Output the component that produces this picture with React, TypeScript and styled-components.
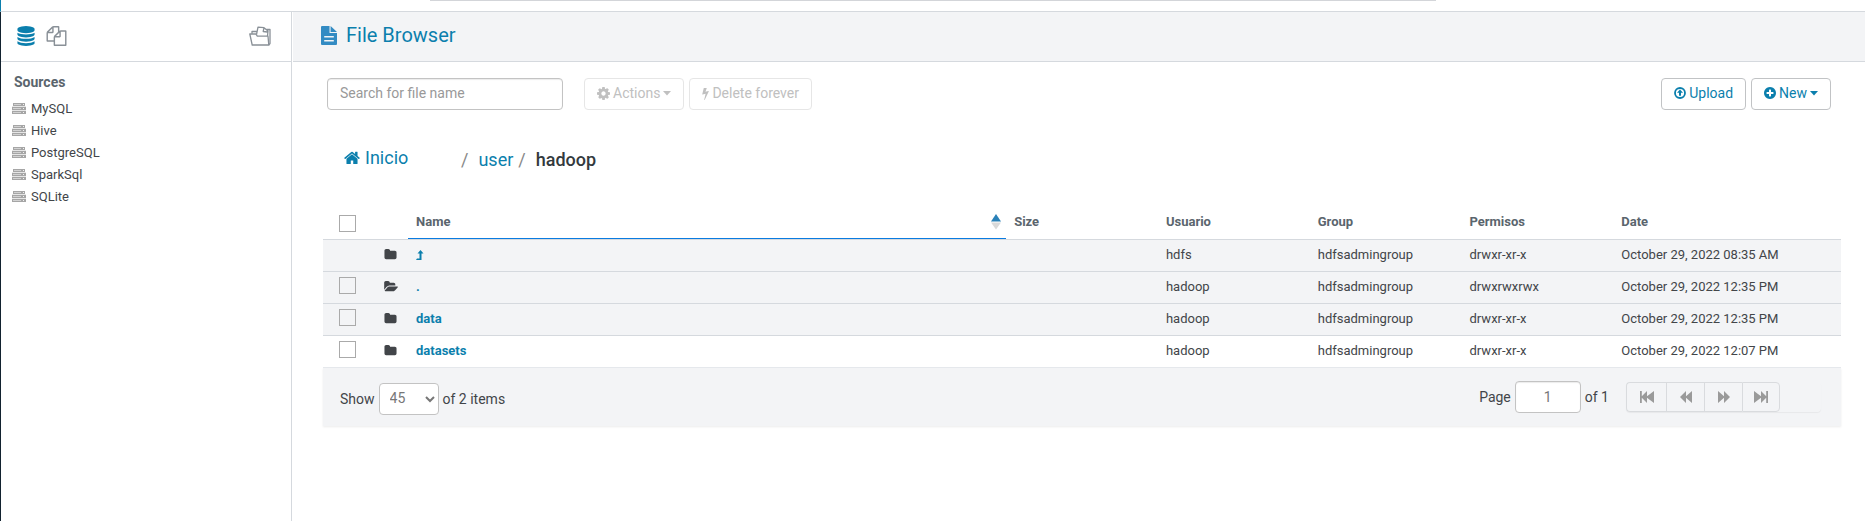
import React from 'react';
import styled, { createGlobalStyle, css } from 'styled-components';

const colors = {
  blue: '#0b7fad',
  textDark: '#33393d',
  text: '#424549',
  muted: '#5a656d',
  line: '#d5d9de',
  panel: '#f3f4f6',
  icon: '#899097',
};

const GlobalStyle = createGlobalStyle`
  *, *::before, *::after { box-sizing: border-box; }
  body { margin: 0; background: #fff; }
  body, button, input, select { font-family: Roboto, "Liberation Sans", sans-serif; }
  a { color: ${colors.blue}; text-decoration: none; }
`;

const Page = styled.div`
  display: flex;
  flex-direction: column;
  min-height: 100vh;
  color: ${colors.text};
  font-size: 13px;
`;

const TopBar = styled.div`
  display: flex;
  justify-content: center;
  height: 12px;
  border-left: 1px solid ${colors.blue};
  border-bottom: 1px solid ${colors.line};
`;

const SearchEdge = styled.div`
  width: 54%;
  height: 1px;
  background: #d3d5d9;
`;

const Body = styled.div`
  display: flex;
  flex: 1;
  border-left: 1px solid #12222f;
`;

const Sidebar = styled.aside`
  flex: none;
  width: 291px;
  border-right: 1px solid ${colors.line};
`;

const SidebarTabs = styled.div`
  display: flex;
  align-items: center;
  gap: 10px;
  height: 50px;
  padding: 0 20px 1px 15px;
  border-bottom: 1px solid ${colors.line};
`;

const IconButton = styled.button<{ $active?: boolean; $end?: boolean }>`
  display: flex;
  padding: 0;
  border: 0;
  background: none;
  color: ${(p) => (p.$active ? colors.blue : colors.icon)};
  ${(p) => p.$end && css`margin-left: auto;`}
`;

const SourcesTitle = styled.h2`
  margin: 11px 0 6px;
  padding-left: 13px;
  color: ${colors.muted};
  font-size: 14px;
  line-height: 18px;
  font-weight: 700;
`;

const SourceList = styled.ul`
  margin: 0;
  padding: 0 0 0 11px;
  list-style: none;
`;

const SourceLink = styled.a`
  display: flex;
  align-items: center;
  gap: 5px;
  height: 22px;
  color: ${colors.text};
`;

const Main = styled.main`
  flex: 1;
  min-width: 0;
  margin-left: 1px;
`;

const TitleBar = styled.header`
  display: flex;
  align-items: center;
  gap: 9px;
  height: 50px;
  padding: 0 0 2px 28px;
  background: ${colors.panel};
  border-bottom: 1px solid ${colors.line};
`;

const Title = styled.h1`
  margin: 0;
  padding-bottom: 2px;
  font-size: 20px;
  line-height: 24px;
  font-weight: 400;
`;

const Toolbar = styled.div`
  display: flex;
  align-items: center;
  gap: 5px;
  padding: 16px 34px 0 34px;
`;

const field = css`
  height: 32px;
  border: 1px solid #c3c3c3;
  border-radius: 4px;
  background: #fff;
  color: #777;
  font-size: 14px;
`;

const SearchInput = styled.input`
  ${field}
  width: 236px;
  margin-right: 16px;
  padding: 0 12px 2px;
  box-shadow: inset 0 1px 1px rgba(0, 0, 0, 0.08);
  &::placeholder { color: #999; opacity: 1; }
`;

const Button = styled.button`
  display: flex;
  align-items: center;
  gap: 3px;
  height: 32px;
  padding: 0 12px 2px;
  border: 1px solid #c1c3c5;
  border-radius: 4px;
  background: #fff;
  color: ${colors.blue};
  font-size: 14px;
  white-space: nowrap;
  &:disabled { color: #c0c0c0; border-color: #e6e6e6; }
`;

const Spacer = styled.div`
  flex: 1;
`;

const Breadcrumbs = styled.nav`
  display: flex;
  align-items: center;
  margin: 36px 0 0 51px;
  height: 28px;
  font-size: 18px;
  line-height: 24px;
`;

const HomeLink = styled.a`
  display: flex;
  align-items: center;
  gap: 5px;
  width: 117px;
  padding-bottom: 4px;
`;

const Crumb = styled.a`
  margin: 0 5px 0 10px;
`;

const Slash = styled.span`
  color: #888;
`;

const CurrentCrumb = styled.strong`
  margin-left: 10px;
  color: ${colors.textDark};
  font-weight: 500;
`;

const TableArea = styled.section`
  margin: 30px 24px 0 30px;
`;

const FileTable = styled.table`
  width: 100%;
  table-layout: fixed;
  border-collapse: separate;
  border-spacing: 0;
  line-height: 18px;
`;

const HeadCell = styled.th<{ $width?: string; $sorted?: boolean }>`
  width: ${(p) => p.$width ?? 'auto'};
  height: 36px;
  padding: 0 8px;
  border-bottom: 1px solid ${colors.line};
  ${(p) => p.$sorted && css`box-shadow: inset 0 -1px #0a7be0;`}
  color: ${colors.muted};
  font-weight: 700;
  text-align: left;
`;

const SortLabel = styled.div`
  display: flex;
  align-items: center;
  justify-content: space-between;
  margin-right: -3px;
`;

const Row = styled.tr<{ $shaded?: boolean }>`
  background: ${(p) => (p.$shaded ? colors.panel : '#fff')};
`;

const Cell = styled.td`
  height: 32px;
  padding: 0 8px 2px;
  border-bottom: 1px solid ${colors.line};
  white-space: nowrap;
  tr:last-child > & { border-bottom-color: #e6e9ed; }
  svg { display: block; }
`;

const CheckCell = styled(Cell)`
  padding: 0 16px 4px;
`;

const CheckHead = styled(HeadCell)`
  padding: 4px 16px 0;
`;

const NameLink = styled.a`
  font-weight: 700;
`;

const Check = styled.input`
  appearance: none;
  display: block;
  width: 17px;
  height: 17px;
  margin: 0;
  border: 1px solid #aaa;
  &:checked { background: ${colors.blue}; }
`;

const Footer = styled.footer`
  display: flex;
  align-items: center;
  justify-content: space-between;
  height: 58px;
  padding: 0 20px 0 17px;
  background: ${colors.panel};
  box-shadow: 0 1px 2px rgba(0, 0, 0, 0.08);
  font-size: 14px;
`;

const PageSize = styled.div`
  display: flex;
  align-items: center;
  gap: 4px;
  padding-top: 4px;
`;

const Select = styled.select`
  ${field}
  width: 60px;
  padding: 0 0 2px 6px;
`;

const Paging = styled.div`
  display: flex;
  align-items: center;
  gap: 4px;
`;

const PageInput = styled.input`
  ${field}
  width: 66px;
  padding: 0 12px;
  text-align: center;
  box-shadow: inset 0 1px 1px rgba(0, 0, 0, 0.08);
`;

const Pager = styled.div`
  display: flex;
  width: 195px;
  margin-left: 13px;
  border-radius: 4px;
  box-shadow: 0 1px 1px rgba(0, 0, 0, 0.05);
`;

const PagerButton = styled.button`
  display: flex;
  align-items: center;
  justify-content: center;
  width: 38px;
  height: 30px;
  padding: 0;
  border: 1px solid #d9dbde;
  border-right-width: 0;
  background: transparent;
  color: #9a9a9a;
  &:first-child { width: 40px; border-radius: 4px 0 0 4px; }
  &:last-child { border-right-width: 1px; border-radius: 0 4px 4px 0; }
`;

type GlyphProps = { d: string; w: number; h?: number; box?: string };

const Glyph = ({ d, w, h = w, box = '0 0 1792 1792' }: GlyphProps) => (
  <svg width={w} height={h} viewBox={box} fill="currentColor" aria-hidden="true">
    <path d={d} fillRule="evenodd" />
  </svg>
);

const paths = {
  database:
    'M896 768q237 0 443-43t325-127v170q0 69-103 128t-280 93.5-385 34.5-385-34.5-280-93.5-103-128v-170q119 84 325 127t443 43zm0 768q237 0 443-43t325-127v170q0 69-103 128t-280 93.5-385 34.5-385-34.5-280-93.5-103-128v-170q119 84 325 127t443 43zm0-384q237 0 443-43t325-127v170q0 69-103 128t-280 93.5-385 34.5-385-34.5-280-93.5-103-128v-170q119 84 325 127t443 43zm0-1152q208 0 385 34.5t280 93.5 103 128v128q0 69-103 128t-280 93.5-385 34.5-385-34.5-280-93.5-103-128v-128q0-69 103-128t280-93.5 385-34.5z',
  files:
    'M1696 384q40 0 68 28t28 68v1216q0 40-28 68t-68 28h-960q-40 0-68-28t-28-68v-288h-544q-40 0-68-28t-28-68v-672q0-40 20-88t48-76l408-408q28-28 76-48t88-20h416q40 0 68 28t28 68v328q68-40 128-40h416zm-544 213l-299 299h299v-299zm-640-384l-299 299h299v-299zm196 647l316-316v-416h-384v416q0 40-28 68t-68 28h-416v640h512v-256q0-40 20-88t48-76zm956 804v-1152h-384v416q0 40-28 68t-68 28h-416v640h896z',
  home:
    'M1472 992v480q0 26-19 45t-45 19h-384v-384h-256v384h-384q-26 0-45-19t-19-45v-480q0-1 .5-3t.5-3l575-474 575 474q1 2 1 6zm223-69l-62 74q-8 9-21 11h-3q-13 0-21-7l-692-577-692 577q-12 8-24 7-13-2-21-11l-62-74q-8-10-7-23.5t11-21.5l719-599q32-26 76-26t76 26l244 204v-195q0-14 9-23t23-9h192q14 0 23 9t9 23v408l219 182q10 8 11 21.5t-7 23.5z',
  cog:
    'M1152 896q0-106-75-181t-181-75-181 75-75 181 75 181 181 75 181-75 75-181zm512-109v222q0 12-8 23t-20 13l-185 28q-19 54-39 91 35 50 107 138 10 12 10 25t-9 23q-27 37-99 108t-94 71q-12 0-26-9l-138-108q-44 23-91 38-16 136-29 186-7 28-36 28h-222q-14 0-24.5-8.5t-11.5-21.5l-28-184q-49-16-90-37l-141 107q-10 9-25 9-14 0-25-11-126-114-165-168-7-10-7-23 0-12 8-23 15-21 51-66.5t54-70.5q-27-50-41-99l-183-27q-13-2-21-12.5t-8-23.5v-222q0-12 8-23t19-13l186-28q14-46 39-92-40-57-107-138-10-12-10-24 0-10 9-23 26-36 98.5-107.5t94.5-71.5q13 0 26 10l138 107q44-23 91-38 16-136 29-186 7-28 36-28h222q14 0 24.5 8.5t11.5 21.5l28 184q49 16 90 37l142-107q9-9 24-9 13 0 25 10 129 119 165 170 7 8 7 22 0 12-8 23-15 21-51 66.5t-54 70.5q26 50 41 98l183 28q13 2 21 12.5t8 23.5z',
  bolt:
    'M1333 566q18 20 7 44l-540 1157q-13 25-42 25-4 0-14-2-17-5-25.5-19t-4.5-30l197-808-406 101q-4 1-12 1-18 0-31-11-18-15-13-39l201-825q4-14 16-23t28-9h328q19 0 32 12.5t13 29.5q0 8-5 18l-171 463 396-98q8-2 12-2 19 0 34 15z',
  plus:
    'M1344 960v-128q0-26-19-45t-45-19h-256v-256q0-26-19-45t-45-19h-128q-26 0-45 19t-19 45v256h-256q-26 0-45 19t-19 45v128q0 26 19 45t45 19h256v256q0 26 19 45t45 19h128q26 0 45-19t19-45v-256h256q26 0 45-19t19-45zm320-64q0 209-103 385.5t-279.5 279.5-385.5 103-385.5-103-279.5-279.5-103-385.5 103-385.5 279.5-279.5 385.5-103 385.5 103 279.5 279.5 103 385.5z',
  folder:
    'M1728 608v704q0 92-66 158t-158 66h-1216q-92 0-158-66t-66-158v-960q0-92 66-158t158-66h320q92 0 158 66t66 158v32h672q92 0 158 66t66 158z',
  folderOpen:
    'M1879 952q0 31-31 66l-336 396q-43 51-120.5 86.5t-143.5 35.5h-1088q-34 0-60.5-13t-26.5-43q0-31 31-66l336-396q43-51 120.5-86.5t143.5-35.5h1088q34 0 60.5 13t26.5 43zm-343-344v160h-832q-94 0-197 47.5t-164 119.5l-337 396-5 6q0-4-.5-12.5t-.5-12.5v-960q0-92 66-158t158-66h320q92 0 158 66t66 158v32h544q92 0 158 66t66 158z',
  file: 'M1 0h7v7h7v11a1 1 0 0 1-1 1h-13a1 1 0 0 1-1-1v-17a1 1 0 0 1 1-1zM9 0l6 6h-6zM3 10v1.500h9v-1.500zM3 14v1.500h9v-1.500z',
  caret: 'M0 0h8l-4 4.500z',
  levelUp: 'M0 10l1-1.500h2.500v-5h-2l3-3.500 3 3.500h-2v6.500z',
  first: 'M0 0h1.800v5.200l5.200-5.200v5.200l7-5.200v12l-7-5.200v5.200l-5.200-5.200v5.200h-1.800z',
  back: 'M6 0v5.200l6-5.200v12l-6-5.200v5.200l-6-6z',
  forward: 'M0 0l6 5.200v-5.200l6 6-6 6v-5.200l-6 5.200z',
  last: 'M14 0h-1.800v5.200l-5.200-5.200v5.200l-7-5.200v12l7-5.200v5.200l5.200-5.200v5.200h1.800z',
};

const Caret = () => <Glyph d={paths.caret} w={8} h={5} box="0 0 8 5" />;

const UploadIcon = () => (
  <svg width="12" height="12" viewBox="0 0 12 12" fill="none" stroke="currentColor" aria-hidden="true">
    <circle cx="6" cy="6" r="5" strokeWidth="1.800" />
    <path d="M6 2.500l3 3.300h-2v3h-2v-3h-2z" fill="currentColor" stroke="none" />
  </svg>
);

const DocumentsIcon = () => (
  <svg width="22" height="20" viewBox="0 0 22 20" fill="none" stroke="currentColor" strokeWidth="1.300" strokeLinejoin="round" aria-hidden="true">
    <path d="M3.200 19L.8 8h6l1.500 2.200h10.700l.8 8.800z" />
    <path d="M3 7.800v-2.300h4.500M7.500 8.500l1.500-7.300 6 .5 4 3.300-.5 5M15 1.700l-.8 3.800 4.300.5M17.500 3.500h3.500v14l-1.300 1.500" />
  </svg>
);

const ServerIcon = () => (
  <svg width="14" height="11" viewBox="0 0 14 11" aria-hidden="true">
    <path fill="#a6a6a6" d="M1 0h12v3h-12zM0 4h14v3h-14zM0 8h14v3h-14z" />
    <path fill="#d2d2d2" d="M2 1h7v1h-7zM1 5h8v1h-8zM1 9h8v1h-8z" />
    <path fill="#e6e6e6" d="M0 3h14v1h-14zM0 7h14v1h-14z" />
    <path fill="#f2f2f2" d="M11 1h1v1h-1zM11 5h1v1h-1zM11 9h1v1h-1z" />
  </svg>
);

const SortIcon = () => (
  <svg width="10" height="16" viewBox="0 0 10 16" aria-hidden="true">
    <path fill="#2a81b8" d="M5 0l5 7.500h-10z" />
    <path fill="#d9d9d9" d="M0 8.500h10l-5 7z" />
  </svg>
);

const sources = ['MySQL', 'Hive', 'PostgreSQL', 'SparkSql', 'SQLite'];

type Entry = { name: string; user: string; perms: string; date: string };

const files: Entry[] = [
  { name: '..', user: 'hdfs', perms: 'drwxr-xr-x', date: 'October 29, 2022 08:35 AM' },
  { name: '.', user: 'hadoop', perms: 'drwxrwxrwx', date: 'October 29, 2022 12:35 PM' },
  { name: 'data', user: 'hadoop', perms: 'drwxr-xr-x', date: 'October 29, 2022 12:35 PM' },
  { name: 'datasets', user: 'hadoop', perms: 'drwxr-xr-x', date: 'October 29, 2022 12:07 PM' },
];

const FileRow = ({ file, shaded }: { file: Entry; shaded: boolean }) => (
  <Row $shaded={shaded}>
    <CheckCell>
      {file.name !== '..' && <Check type="checkbox" aria-label={`Select ${file.name}`} />}
    </CheckCell>
    <Cell>
      {file.name === '.' ? (
        <Glyph d={paths.folderOpen} w={14} h={13} box="0 0 1879 1792" />
      ) : (
        <Glyph d={paths.folder} w={13} />
      )}
    </Cell>
    <Cell>
      <NameLink href="#" aria-label={file.name === '..' ? 'Parent folder' : undefined}>
        {file.name === '..' ? <Glyph d={paths.levelUp} w={8} h={10} box="0 0 8 10" /> : file.name}
      </NameLink>
    </Cell>
    <Cell />
    <Cell>{file.user}</Cell>
    <Cell>hdfsadmingroup</Cell>
    <Cell>{file.perms}</Cell>
    <Cell>{file.date}</Cell>
  </Row>
);

export default function App() {
  return (
    <Page>
      <GlobalStyle />
      <TopBar>
        <SearchEdge />
      </TopBar>
      <Body>
        <Sidebar>
          <SidebarTabs>
            <IconButton $active aria-label="Sources">
              <Glyph d={paths.database} w={20} />
            </IconButton>
            <IconButton aria-label="Files">
              <Glyph d={paths.files} w={21} h={20} />
            </IconButton>
            <IconButton $end aria-label="Documents">
              <DocumentsIcon />
            </IconButton>
          </SidebarTabs>
          <SourcesTitle>Sources</SourcesTitle>
          <SourceList>
            {sources.map((name) => (
              <li key={name}>
                <SourceLink href="#">
                  <ServerIcon />
                  {name}
                </SourceLink>
              </li>
            ))}
          </SourceList>
        </Sidebar>
        <Main>
          <TitleBar>
            <svg width="16" height="19" viewBox="0 0 15 19" preserveAspectRatio="none" fill="#338bc3" aria-hidden="true">
              <path fillRule="evenodd" d={paths.file} />
            </svg>
            <Title>
              <a href="#">File Browser</a>
            </Title>
          </TitleBar>
          <Toolbar>
            <SearchInput type="text" placeholder="Search for file name" aria-label="Search for file name" />
            <Button disabled>
              <Glyph d={paths.cog} w={13} box="128 128 1536 1536" />
              Actions
              <Caret />
            </Button>
            <Button disabled>
              <Glyph d={paths.bolt} w={7} h={13} box="448 0 896 1792" />
              Delete forever
            </Button>
            <Spacer />
            <Button>
              <UploadIcon />
              Upload
            </Button>
            <Button>
              <Glyph d={paths.plus} w={12} box="128 128 1536 1536" />
              New
              <Caret />
            </Button>
          </Toolbar>
          <Breadcrumbs aria-label="Path">
            <HomeLink href="#">
              <Glyph d={paths.home} w={16} h={14} box="64 200 1664 1400" />
              Inicio
            </HomeLink>
            <Slash>/</Slash>
            <Crumb href="#">user</Crumb>
            <Slash>/</Slash>
            <CurrentCrumb>hadoop</CurrentCrumb>
          </Breadcrumbs>
          <TableArea>
            <FileTable>
              <thead>
                <tr>
                  <CheckHead $width="53px">
                    <Check type="checkbox" aria-label="Select all" />
                  </CheckHead>
                  <HeadCell $width="32px" />
                  <HeadCell $sorted>
                    <SortLabel>
                      Name
                      <SortIcon />
                    </SortLabel>
                  </HeadCell>
                  <HeadCell $width="10%">Size</HeadCell>
                  <HeadCell $width="10%">Usuario</HeadCell>
                  <HeadCell $width="10%">Group</HeadCell>
                  <HeadCell $width="10%">Permisos</HeadCell>
                  <HeadCell $width="15%">Date</HeadCell>
                </tr>
              </thead>
              <tbody>
                {files.map((file, i) => (
                  <FileRow key={file.name} file={file} shaded={i < 3} />
                ))}
              </tbody>
            </FileTable>
            <Footer>
              <PageSize>
                <label htmlFor="page-size">Show</label>
                <Select id="page-size" defaultValue="45">
                  <option>15</option>
                  <option>45</option>
                  <option>100</option>
                </Select>
                of 2 items
              </PageSize>
              <Paging>
                <label htmlFor="page-number">Page</label>
                <PageInput id="page-number" type="text" defaultValue="1" />
                of 1
                <Pager>
                  <PagerButton aria-label="First page">
                    <Glyph d={paths.first} w={14} h={12} box="0 0 14 12" />
                  </PagerButton>
                  <PagerButton aria-label="Previous page">
                    <Glyph d={paths.back} w={12} h={12} box="0 0 12 12" />
                  </PagerButton>
                  <PagerButton aria-label="Next page">
                    <Glyph d={paths.forward} w={12} h={12} box="0 0 12 12" />
                  </PagerButton>
                  <PagerButton aria-label="Last page">
                    <Glyph d={paths.last} w={14} h={12} box="0 0 14 12" />
                  </PagerButton>
                </Pager>
              </Paging>
            </Footer>
          </TableArea>
        </Main>
      </Body>
    </Page>
  );
}
